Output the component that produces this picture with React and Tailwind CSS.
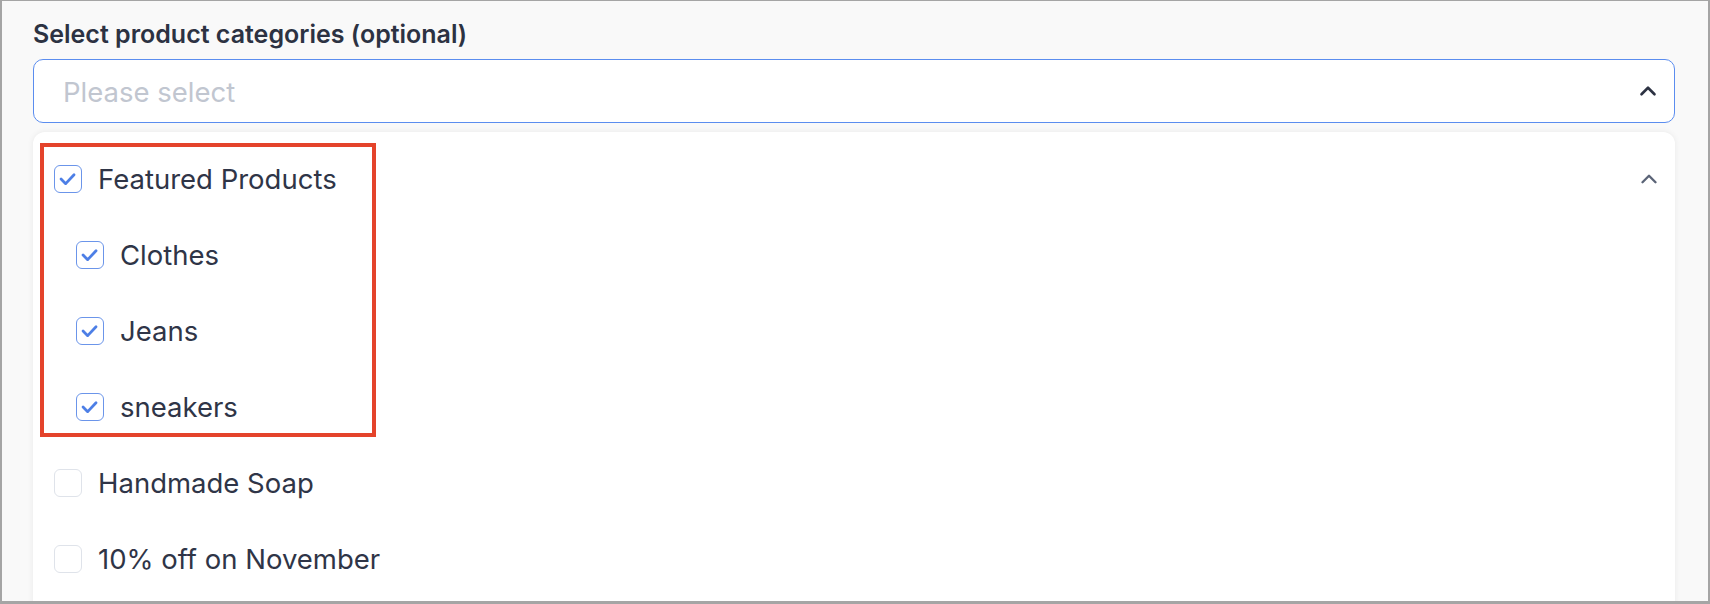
import { ChevronUp } from 'lucide-react'

const groups = [
  { label: 'Featured Products', checked: true, open: true, children: ['Clothes', 'Jeans', 'sneakers'] },
  { label: 'Handmade Soap', checked: false },
  { label: '10% off on November', checked: false },
]

function Box({ checked }) {
  return (
    <div
      className={`w-[28px] h-[28px] flex-shrink-0 rounded-[6px] border-[1.5px] bg-white ${checked ? 'border-[#6b95ea]' : 'border-[#dfe3ea]'}`}
    >
      {checked && (
        <svg viewBox="0 0 28 28" className="w-full h-full">
          <path d="M6.5 14 L11.5 19 L20.5 9.5" fill="none" stroke="#4d7fe6" strokeWidth="3" strokeLinecap="round" strokeLinejoin="round" />
        </svg>
      )}
    </div>
  )
}

function Row({ label, checked, indent, chevron }) {
  return (
    <div className={`flex items-center h-[76px] ${indent ? 'pl-[22px]' : ''}`}>
      <Box checked={checked} />
      <span className="ml-[16px] pt-[1px] text-[27.5px] text-[#2f3547]">{label}</span>
      {chevron && <ChevronUp className="ml-auto w-[26px] h-[26px] text-[#5b6477]" strokeWidth={2.2} />}
    </div>
  )
}

export default function App() {
  return (
    <div className="h-[604px] w-[1710px] overflow-hidden bg-[#f9f9f9] border-[#a5a5a5] border-t border-l-2 border-r-2 border-b-[3px] font-['Inter',sans-serif]">
      <div className="pl-[31px] pr-[33px] pt-[19px]">
        <label className="block text-[25px] leading-[28px] font-semibold text-[#2c3242]">
          Select product categories (optional)
        </label>

        {/* select trigger */}
        <div className="mt-[11px] h-[64px] flex items-center justify-between rounded-[10px] border border-[#5b8def] bg-white pl-[29px] pr-[13px]">
          <span className="pt-[3px] text-[27.5px] text-[#c1c6d0]">Please select</span>
          <ChevronUp className="w-[26px] h-[26px] text-[#2c3242]" strokeWidth={2.4} />
        </div>

        {/* options panel */}
        <div className="relative mt-[9px] rounded-[12px] bg-white shadow-[0_0_6px_rgba(0,0,0,0.07)] pt-[9px] pl-[21px] pr-[13px] pb-[30px]">
          {groups.map(g => (
            <div key={g.label}>
              <Row label={g.label} checked={g.checked} chevron={g.open} />
              {g.children && g.children.map(c => (
                <Row key={c} label={c} checked indent />
              ))}
            </div>
          ))}
          {/* highlight annotation */}
          <div className="absolute left-[7px] top-[11px] w-[336px] h-[294px] border-4 border-[#e4432b] pointer-events-none" />
        </div>
      </div>
    </div>
  )
}
